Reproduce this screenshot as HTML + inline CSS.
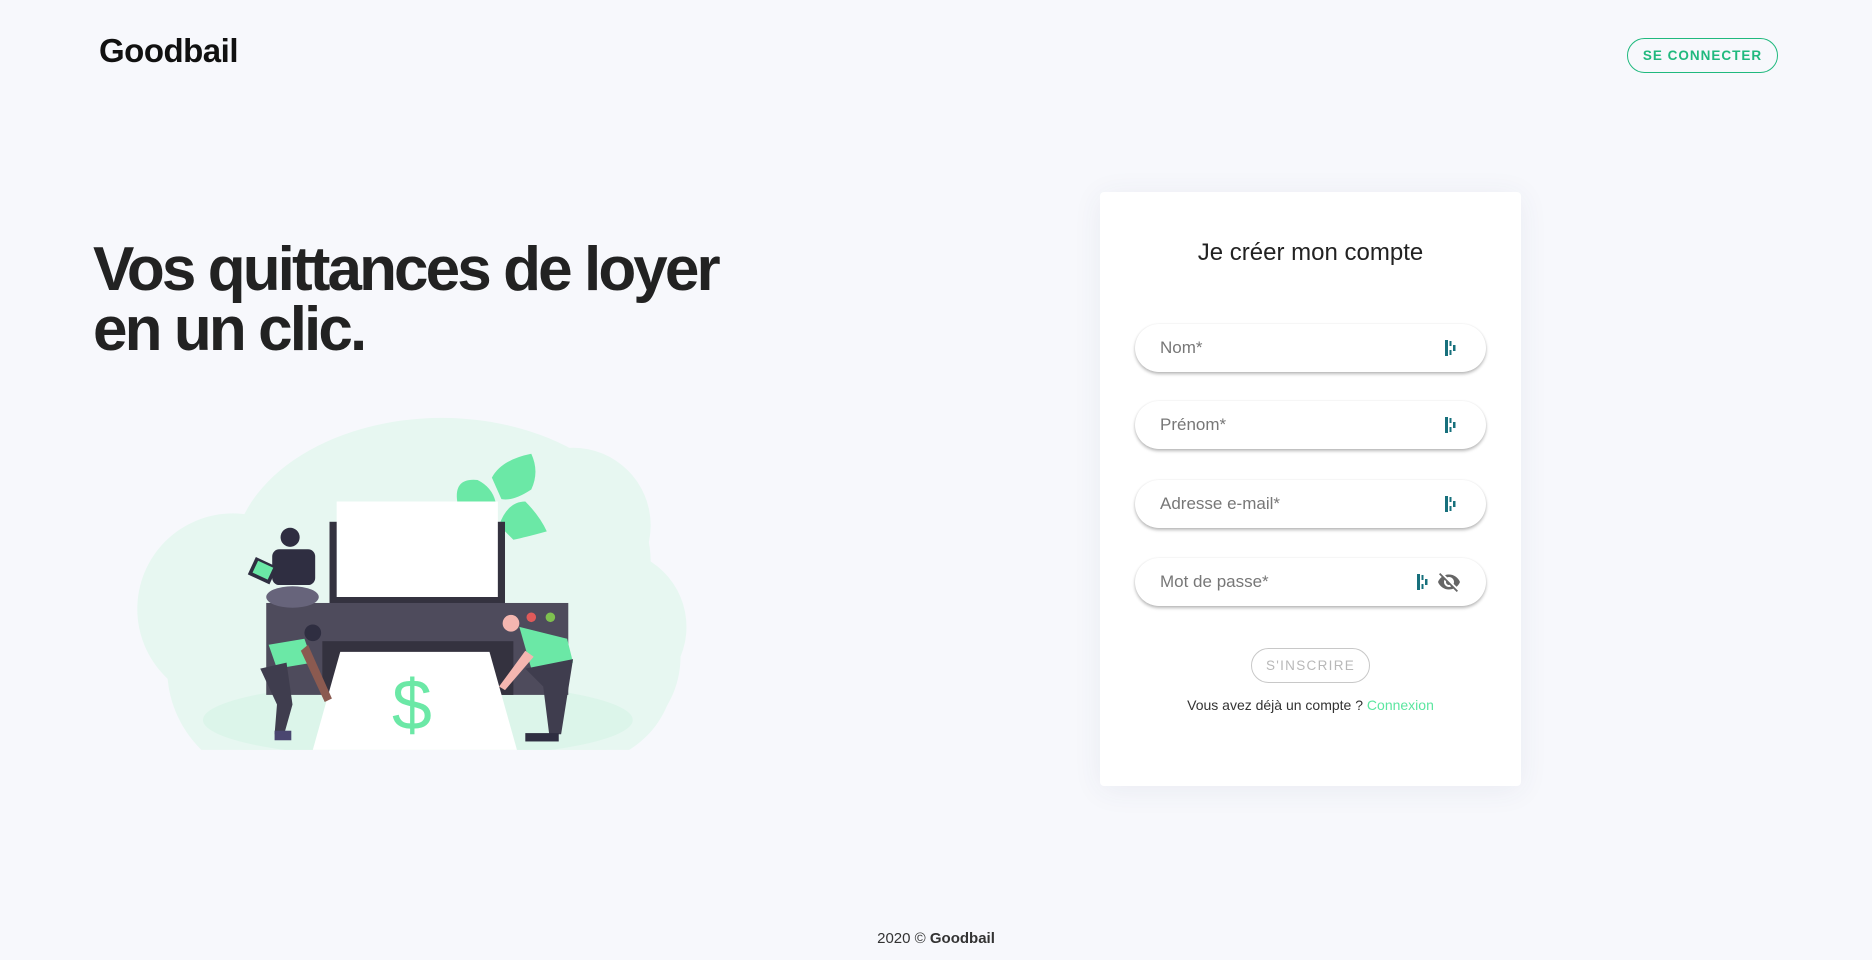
<!DOCTYPE html>
<html><head><meta charset="utf-8"><style>
*{margin:0;padding:0;box-sizing:border-box}
html,body{width:1872px;height:960px;overflow:hidden;background:#f7f8fc;font-family:"Liberation Sans",Arial,sans-serif;position:relative}
.logo{position:absolute;left:99px;top:32px;font-size:33px;font-weight:bold;color:#111;letter-spacing:-0.5px}
.btn{position:absolute;left:1627px;top:38px;width:151px;height:35px;border:1px solid #20b97e;border-radius:18px;color:#20b97e;font-size:13.5px;font-weight:bold;letter-spacing:1px;text-align:center;line-height:33px}
h1{position:absolute;left:93px;top:240px;font-size:62px;line-height:60px;font-weight:bold;color:#222;letter-spacing:-2.9px}
.card{position:absolute;left:1100px;top:192px;width:421px;height:594px;background:#fff;border-radius:4px;box-shadow:0 4px 30px rgba(60,70,120,0.07)}
.title{position:absolute;left:1100px;width:421px;top:239px;text-align:center;font-size:24px;color:#222}
.inp{position:absolute;left:1135px;width:351px;height:48px;border-radius:24px;background:#fff;box-shadow:0 2px 3px rgba(0,0,0,0.28),0 0 2px rgba(0,0,0,0.06)}
.inp span{position:absolute;left:25px;top:14px;font-size:17px;color:#777}
.ic{position:absolute;top:16px;width:11px;height:16px}
.sub{position:absolute;left:1251px;top:648px;width:119px;height:35px;border:1px solid #c8c8c8;border-radius:18px;text-align:center;line-height:33px;font-size:13.5px;letter-spacing:1.3px;color:#b8b8b8}
.have{position:absolute;left:1100px;width:421px;top:697px;text-align:center;font-size:14px;color:#333}
.have b{font-weight:normal;color:#5ce6a0}
.foot{position:absolute;left:0;width:1872px;top:930px;text-align:center;font-size:15px;color:#333}
</style></head><body>
<div class="logo">Goodbail</div>
<div class="btn">SE CONNECTER</div>
<h1>Vos quittances de loyer<br>en un clic.</h1>

<svg style="position:absolute;left:0;top:0" width="1872" height="960" viewBox="0 0 1568 804">
<defs><clipPath id="c"><rect x="0" y="0" width="1568" height="628"/></clipPath></defs>
<g clip-path="url(#c)">
<g fill="#e7f7f1">
<ellipse cx="370" cy="470" rx="175" ry="120"/>
<circle cx="195" cy="510" r="80"/>
<circle cx="480" cy="440" r="65"/>
<circle cx="510" cy="525" r="65"/>
<rect x="140" y="470" width="430" height="160" rx="80"/>
<circle cx="235" cy="560" r="95"/>
<circle cx="485" cy="560" r="80"/>
</g>
<ellipse cx="350" cy="603" rx="180" ry="32" fill="#dcf5ea"/>
</g>
<g fill="#6be8a6">
<path d="M383 420 Q380 400 400 402 Q412 408 415 420 Z"/>
<path d="M412 400 Q420 385 445 380 Q452 395 445 410 Q430 420 420 418 Z"/>
<path d="M418 440 Q425 420 440 420 Q452 432 458 445 Q440 450 430 452 Z"/>
</g>
<rect x="276" y="437" width="147" height="70" fill="#34323f"/>
<rect x="282" y="420" width="135" height="80" fill="#fff"/>
<rect x="223" y="505" width="253" height="77" fill="#4e4b5c"/>
<rect x="270" y="537" width="160" height="45" fill="#34323f"/>
<circle cx="445" cy="517" r="4" fill="#e05a5a"/>
<circle cx="461" cy="517" r="4" fill="#7ec04f"/>
<polygon points="285,546 410,546 433,628 262,628" fill="#fff"/>
<text x="345" y="611" font-family="Liberation Sans,sans-serif" font-size="60" fill="#6be8a6" text-anchor="middle">$</text>
<circle cx="243" cy="450" r="8" fill="#2f2e41"/>
<rect x="228" y="460" width="36" height="30" rx="6" fill="#2f2e41"/>
<rect x="210" y="470" width="20" height="16" fill="#2f2e41" transform="rotate(25 220 478)"/>
<rect x="213" y="472" width="14" height="11" fill="#6be8a6" transform="rotate(25 220 478)"/>
<ellipse cx="245" cy="500" rx="22" ry="9" fill="#67647b"/>
<circle cx="262" cy="530" r="7" fill="#2f2e41"/>
<path d="M225 540 L255 535 L262 555 L232 560 Z" fill="#6be8a6"/>
<path d="M218 560 L240 555 L245 590 L238 615 L230 615 L232 590 Z" fill="#3f3d4e"/>
<rect x="230" y="612" width="14" height="8" fill="#4a4670"/>
<path d="M258 540 L278 585 L272 588 L252 545 Z" fill="#8b5a50"/>
<circle cx="428" cy="522" r="7" fill="#f4b6b0"/>
<path d="M435 525 L475 535 L480 555 L445 560 Z" fill="#6be8a6"/>
<path d="M440 560 L480 552 L470 615 L460 615 L455 575 Z" fill="#3f3d4e"/>
<rect x="440" y="614" width="28" height="7" fill="#2f2e41"/>
<path d="M440 545 L418 575 L423 578 L447 550 Z" fill="#f4b6b0"/>
</svg>

<div class="card"></div>
<div class="title">Je créer mon compte</div>

<div class="inp" style="top:324px"><span>Nom*</span><svg class="ic" style="left:310px" viewBox="0 0 11 16"><rect x="0" y="0" width="3" height="16" fill="#17707c"/><rect x="4.5" y="1" width="2" height="5" fill="#17707c"/><rect x="4.5" y="10" width="2" height="5" fill="#17707c"/><rect x="8" y="5" width="2.5" height="6" fill="#17707c"/></svg></div>
<div class="inp" style="top:401px"><span>Prénom*</span><svg class="ic" style="left:310px" viewBox="0 0 11 16"><rect x="0" y="0" width="3" height="16" fill="#17707c"/><rect x="4.5" y="1" width="2" height="5" fill="#17707c"/><rect x="4.5" y="10" width="2" height="5" fill="#17707c"/><rect x="8" y="5" width="2.5" height="6" fill="#17707c"/></svg></div>
<div class="inp" style="top:480px"><span>Adresse e-mail*</span><svg class="ic" style="left:310px" viewBox="0 0 11 16"><rect x="0" y="0" width="3" height="16" fill="#17707c"/><rect x="4.5" y="1" width="2" height="5" fill="#17707c"/><rect x="4.5" y="10" width="2" height="5" fill="#17707c"/><rect x="8" y="5" width="2.5" height="6" fill="#17707c"/></svg></div>
<div class="inp" style="top:558px"><span>Mot de passe*</span><svg class="ic" style="left:282px" viewBox="0 0 11 16"><rect x="0" y="0" width="3" height="16" fill="#17707c"/><rect x="4.5" y="1" width="2" height="5" fill="#17707c"/><rect x="4.5" y="10" width="2" height="5" fill="#17707c"/><rect x="8" y="5" width="2.5" height="6" fill="#17707c"/></svg>
<svg style="position:absolute;left:302px;top:12px" width="24" height="24" viewBox="0 0 24 24"><path fill="#666" d="M12 7c2.76 0 5 2.24 5 5 0 .65-.13 1.26-.36 1.83l2.92 2.92c1.51-1.26 2.7-2.89 3.43-4.75-1.73-4.39-6-7.5-11-7.5-1.4 0-2.74.25-3.98.7l2.16 2.16C10.74 7.13 11.35 7 12 7zM2 4.27l2.28 2.28.46.46C3.08 8.3 1.78 10.02 1 12c1.73 4.39 6 7.5 11 7.5 1.55 0 3.03-.3 4.38-.84l.42.42L19.73 22 21 20.73 3.27 3 2 4.27zM7.53 9.8l1.55 1.55c-.05.21-.08.43-.08.65 0 1.66 1.34 3 3 3 .22 0 .44-.03.65-.08l1.55 1.55c-.67.33-1.41.53-2.2.53-2.76 0-5-2.24-5-5 0-.79.2-1.53.53-2.2z"/></svg></div>

<div class="sub">S'INSCRIRE</div>
<div class="have">Vous avez déjà un compte ? <b>Connexion</b></div>
<div class="foot">2020 © <b>Goodbail</b></div>
</body></html>
